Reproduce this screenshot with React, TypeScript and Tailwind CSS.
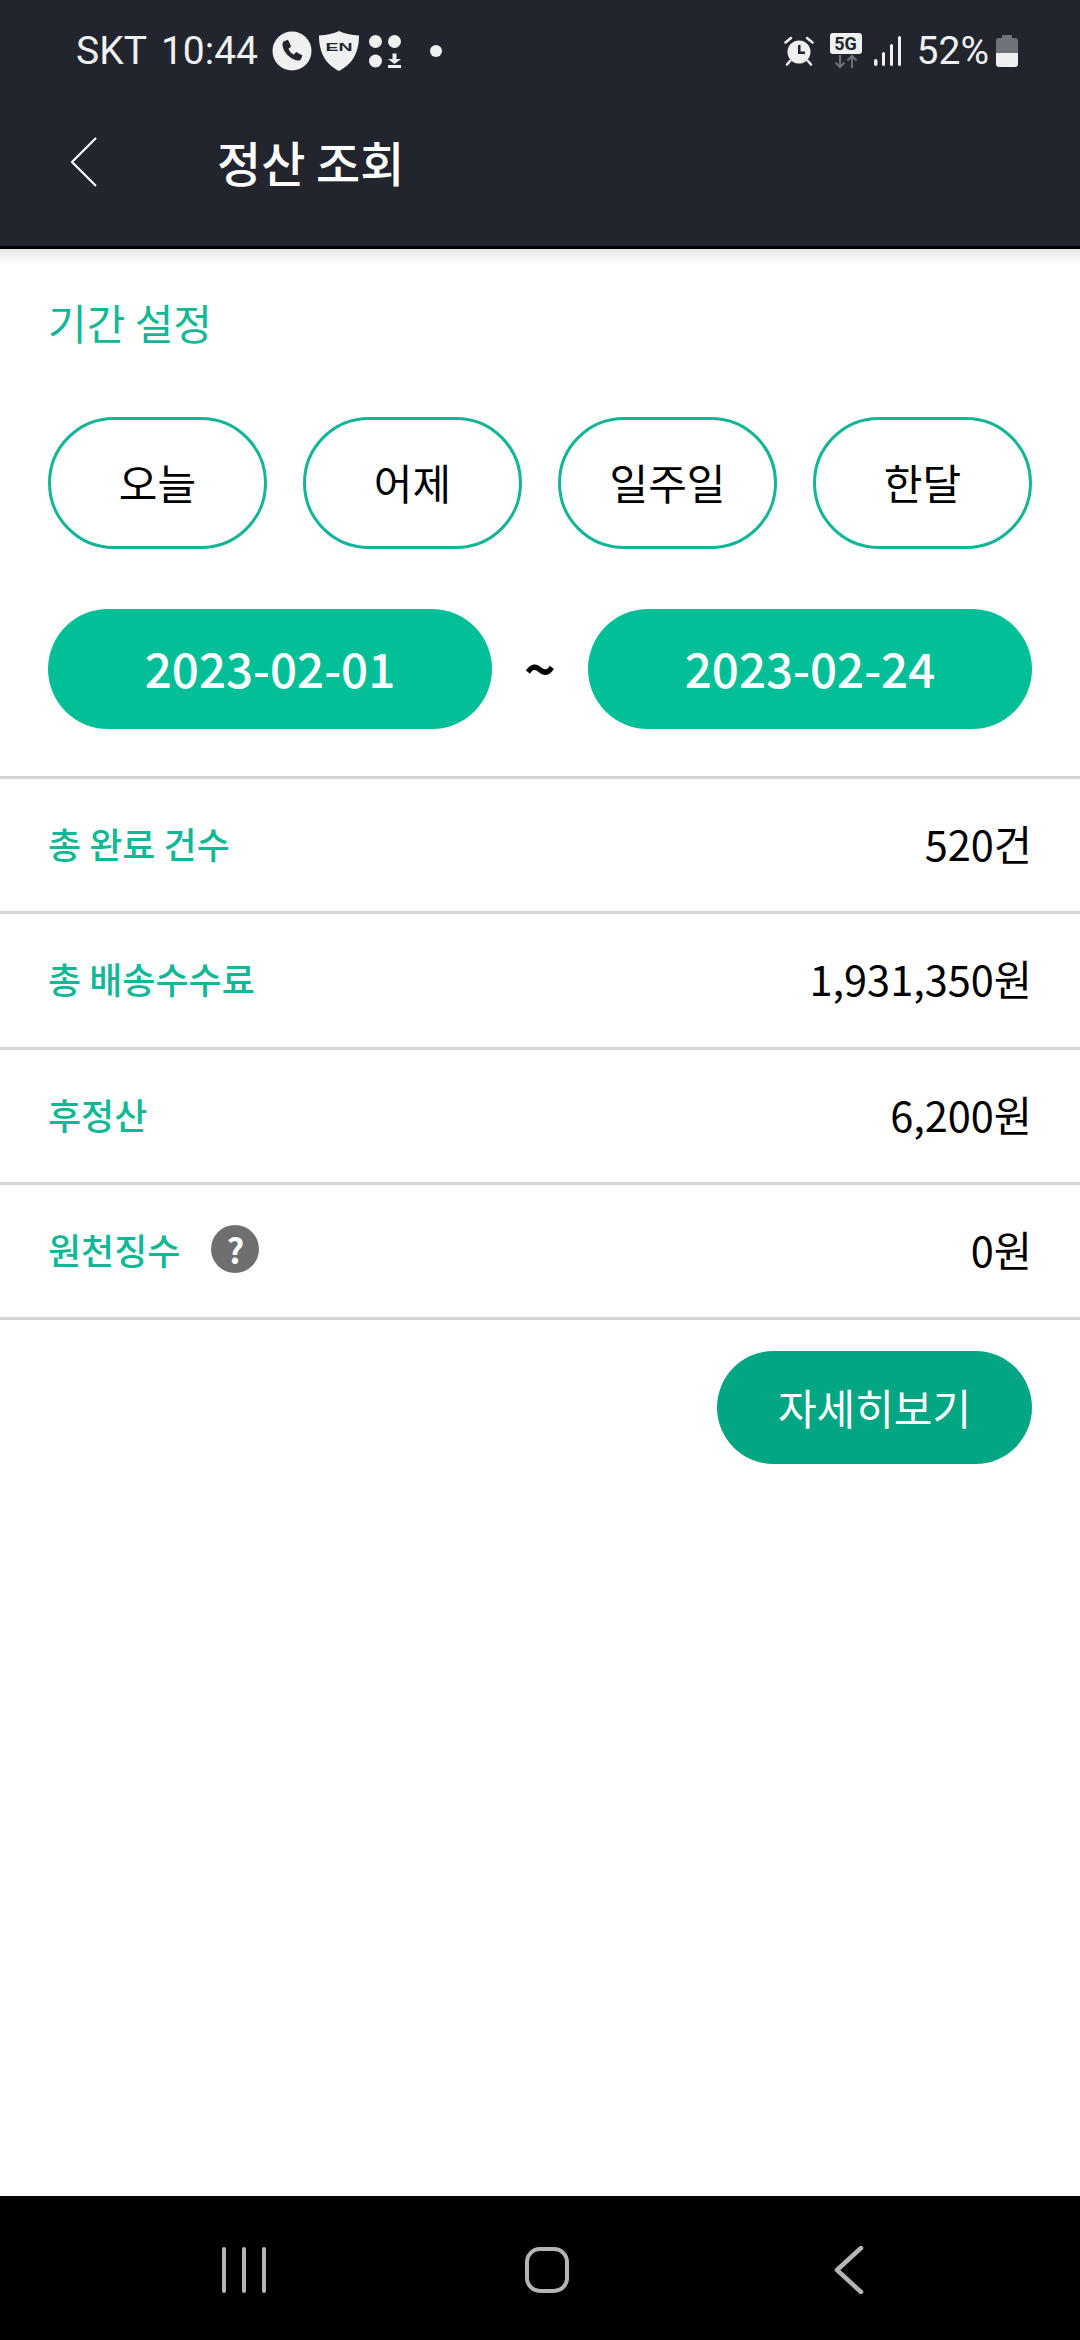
const korean = "font-['Noto_Sans_CJK_KR','Noto_Sans',sans-serif]";

function PhoneIcon() {
  return (
    <svg width="40" height="40" viewBox="0 0 40 40">
      <circle cx="20" cy="20" r="19.500" fill="#eff1f1" />
      <path
        d="M11.500 10.500l4.500-1.700 3.200 6.700-2.700 2.200c.9 2.500 2.900 4.700 5.300 5.700l2.400-2.500 6.300 3.500-1.800 4.300c-1.200.9-2.700 1-4.200.6C17.700 27.700 12 21.800 10.600 15c-.3-1.700-.1-3.300.9-4.500z"
        fill="#22252d"
      />
    </svg>
  );
}

function ShieldIcon() {
  return (
    <svg width="40" height="40" viewBox="0 0 40 40">
      <path
        d="M20 0c5 2.600 12 4.200 20 4.600 0 15-5 28-20 35.400C5 32.600 0 19.600 0 4.600 8 4.200 15 2.600 20 0z"
        fill="#eff1f1"
      />
      <text
        x="20"
        y="19.500"
        textAnchor="middle"
        fontSize="11.500"
        fontWeight="700"
        fontFamily="Liberation Sans, sans-serif"
        fill="#22252d"
        textLength="27"
        lengthAdjust="spacingAndGlyphs"
      >
        EN
      </text>
    </svg>
  );
}

function AppsDownloadIcon() {
  return (
    <svg width="32" height="33" viewBox="0 0 32 33">
      <circle cx="6.500" cy="6.500" r="6.500" fill="#eff1f1" />
      <circle cx="25.500" cy="6.500" r="6.500" fill="#eff1f1" />
      <circle cx="6.500" cy="26" r="6.500" fill="#eff1f1" />
      <path d="M23.500 18.500h4v5.500h4.500l-6.500 5-6.500-5h4.500z" fill="#eff1f1" />
      <rect x="19" y="30" width="13" height="3" fill="#eff1f1" />
    </svg>
  );
}

function AlarmIcon() {
  return (
    <svg width="30" height="30" viewBox="0 0 30 30">
      <circle cx="15" cy="16" r="11.500" fill="#eff1f1" />
      <path d="M14 9h2.500v6.500H21V18h-7z" fill="#22252d" />
      <path d="M1.500 6.500L7 2M28.500 6.500L23 2M6 25l-3 3.500M24 25l3 3.500" stroke="#eff1f1" strokeWidth="2.500" strokeLinecap="round" />
    </svg>
  );
}

function FiveGIcon() {
  return (
    <div className="flex w-[32px] flex-col items-center">
      <div className="flex h-[21px] w-[32px] items-center justify-center rounded-[3px] bg-[#eff1f1] font-['Roboto',sans-serif] text-[18px] leading-none font-bold text-[#22252d]">
        5G
      </div>
      <svg width="28" height="15" viewBox="0 0 28 15">
        <path d="M8 1v12M3.500 8.500L8 13l4.500-4.500" fill="none" stroke="#6f7378" strokeWidth="2" />
        <path d="M20 14V2M15.500 6.500L20 2l4.500 4.500" fill="none" stroke="#6f7378" strokeWidth="2" />
      </svg>
    </div>
  );
}

function SignalIcon() {
  return (
    <svg width="28" height="30" viewBox="0 0 28 30">
      <rect x="0" y="23" width="3.500" height="7" rx="1.700" fill="#eff1f1" />
      <rect x="8" y="16" width="3" height="14" rx="1.500" fill="#eff1f1" />
      <rect x="16" y="8" width="3" height="22" rx="1.500" fill="#eff1f1" />
      <rect x="24" y="0" width="3" height="30" rx="1.500" fill="#eff1f1" />
    </svg>
  );
}

function BatteryIcon() {
  return (
    <svg width="22" height="32" viewBox="0 0 22 32">
      <path d="M7 0h8a1 1 0 0 1 1 1v2h3a3 3 0 0 1 3 3v12H0V6a3 3 0 0 1 3-3h3V1a1 1 0 0 1 1-1z" fill="#6f7378" />
      <path d="M0 18h22v11a3 3 0 0 1-3 3H3a3 3 0 0 1-3-3z" fill="#eff1f1" />
    </svg>
  );
}

function StatusBar() {
  return (
    <div className="flex h-[102px] items-center justify-between pr-[62px] pl-[76px] font-['Roboto',sans-serif] text-[39px] text-[#eff1f1]">
      <div className="flex items-center">
        <span className="mr-[14px]">SKT</span>
        <span className="mr-[14px]">10:44</span>
        <PhoneIcon />
        <div className="ml-[7px]">
          <ShieldIcon />
        </div>
        <div className="ml-[10px]">
          <AppsDownloadIcon />
        </div>
        <div className="ml-[29px] h-[12px] w-[12px] rounded-full bg-[#eff1f1]" />
      </div>
      <div className="flex items-center">
        <AlarmIcon />
        <div className="ml-[16px]">
          <FiveGIcon />
        </div>
        <div className="ml-[12px]">
          <SignalIcon />
        </div>
        <span className="ml-[15px]">52%</span>
        <div className="ml-[7px]">
          <BatteryIcon />
        </div>
      </div>
    </div>
  );
}

function Header() {
  return (
    <div className="h-[249px] shrink-0 border-b-[3px] border-black bg-[#22252d]">
      <StatusBar />
      <div className="flex h-[122px] items-center pl-[71px]">
        <svg width="26" height="50" viewBox="0 0 26 50" fill="none" className="mb-[3px]">
          <path d="M25 1L1 25l24 24" stroke="#ffffff" strokeWidth="2.200" />
        </svg>
        <h1 className={`mb-[4px] ml-[120px] text-[48px] font-medium text-white ${korean}`}>정산 조회</h1>
      </div>
    </div>
  );
}

function QuickRange({ label }: { label: string }) {
  return (
    <button className="flex h-[132px] w-[219px] items-center justify-center rounded-full border-[3px] border-[#13b597] bg-white pb-[4px] text-[42px] text-black">
      {label}
    </button>
  );
}

function DateButton({ date }: { date: string }) {
  return (
    <button className="flex h-[120px] w-[444px] items-center justify-center rounded-full bg-[#02bf98] pb-[3px] text-[47.500px] font-medium text-white">
      {date}
    </button>
  );
}

function SummaryRow({
  label,
  value,
  help,
}: {
  label: string;
  value: string;
  help?: boolean;
}) {
  return (
    <div className="flex h-[135.300px] items-center justify-between border-b-[3px] border-[#d5d5d5] px-[48px] pb-[4px]">
      <div className="flex items-center">
        <span className="text-[36px] font-medium text-[#10b896]">{label}</span>
        {help && (
          <span className="ml-[31px] flex h-[48px] w-[48px] items-center justify-center rounded-full bg-[#6f6f6f] text-[34px] font-bold text-white">
            ?
          </span>
        )}
      </div>
      <span className="text-[41.500px] text-black">{value}</span>
    </div>
  );
}

function NavBar() {
  return (
    <div className="flex h-[144px] shrink-0 items-center bg-black pt-[4px]">
      <div className="flex w-full items-center justify-between pr-[216px] pl-[222px]">
        <svg width="44" height="46" viewBox="0 0 44 46" fill="none" stroke="#b4b4b4" strokeWidth="4" strokeLinecap="round">
          <path d="M2 2v42M22 2v42M42 2v42" />
        </svg>
        <svg width="44" height="46" viewBox="0 0 44 46" fill="none" className="mr-[6px]">
          <rect x="2" y="2" width="40" height="42" rx="13" stroke="#b4b4b4" strokeWidth="4" />
        </svg>
        <svg width="30" height="48" viewBox="0 0 30 48" fill="none">
          <path d="M27 2L3 24l24 22" stroke="#b4b4b4" strokeWidth="4.500" strokeLinecap="round" strokeLinejoin="round" />
        </svg>
      </div>
    </div>
  );
}

export default function App() {
  return (
    <div className={`flex h-[2340px] w-[1080px] flex-col bg-white ${korean}`}>
      <Header />
      <main className="flex-1 bg-gradient-to-b from-[#e6e6e6] to-white to-[16px]">
        <div className="flex h-[149px] items-center px-[48px] pb-[5px] text-[42px] text-[#10b896]">
          기간 설정
        </div>
        <div className="mt-[19px] flex justify-between px-[48px]">
          <QuickRange label="오늘" />
          <QuickRange label="어제" />
          <QuickRange label="일주일" />
          <QuickRange label="한달" />
        </div>
        <div className="mt-[60px] flex items-center justify-between px-[48px]">
          <DateButton date="2023-02-01" />
          <span className="mb-[4px] text-[54px] leading-none font-bold text-black">~</span>
          <DateButton date="2023-02-24" />
        </div>
        <div className="mt-[47px] border-t-[3px] border-[#d5d5d5]">
          <SummaryRow label="총 완료 건수" value="520건" />
          <SummaryRow label="총 배송수수료" value="1,931,350원" />
          <SummaryRow label="후정산" value="6,200원" />
          <SummaryRow label="원천징수" value="0원" help />
        </div>
        <div className="mt-[31px] flex justify-end px-[48px]">
          <button className="flex h-[113px] w-[315px] items-center justify-center rounded-full bg-[#03a682] pb-[3px] text-[42px] text-white">
            자세히보기
          </button>
        </div>
      </main>
      <NavBar />
    </div>
  );
}
